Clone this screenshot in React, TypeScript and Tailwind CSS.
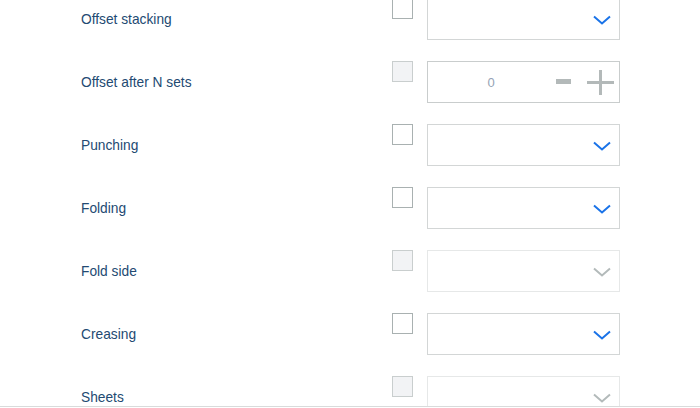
type Row = {
  label: string;
  kind: "select" | "number";
  disabled?: boolean;
};

const rows: Row[] = [
  { label: "Offset stacking", kind: "select" },
  { label: "Offset after N sets", kind: "number", disabled: true },
  { label: "Punching", kind: "select" },
  { label: "Folding", kind: "select" },
  { label: "Fold side", kind: "select", disabled: true },
  { label: "Creasing", kind: "select" },
  { label: "Sheets", kind: "select", disabled: true },
];

function Chevron({ disabled }: { disabled?: boolean }) {
  return (
    <svg width="18" height="10" viewBox="0 0 18 10" fill="none">
      <path
        d="M1 1.5 L9 8.5 L17 1.5"
        stroke={disabled ? "#b3baba" : "#1a73e8"}
        strokeWidth="2"
      />
    </svg>
  );
}

function Checkbox({ disabled }: { disabled?: boolean }) {
  return (
    <div
      className={
        disabled
          ? "w-[21px] h-[21px] shrink-0 border border-[#c9cece] bg-[#f2f3f5]"
          : "w-[21px] h-[21px] shrink-0 border border-[#a9b1b1] bg-white"
      }
    />
  );
}

function SelectBox({ disabled }: { disabled?: boolean }) {
  return (
    <div
      className={`w-[193px] h-[42px] shrink-0 flex items-center justify-end pr-[8px] pt-[2px] border ${
        disabled ? "border-[#e6e8e8]" : "border-[#d3d6d6]"
      }`}
    >
      <Chevron disabled={disabled} />
    </div>
  );
}

function NumberBox() {
  return (
    <div className="w-[193px] h-[42px] shrink-0 flex items-center border border-[#c9cdcd]">
      <span className="flex-1 pr-[2px] pt-[2px] text-center text-[13px] text-[#95a3b5]">0</span>
      <div className="flex items-center gap-[16px] pr-[5px]">
        <div className="w-[15px] h-[5px] bg-[#b3b9b9] -mt-[2px]" />
        <svg width="27" height="25" viewBox="0 0 27 25">
          <rect x="12" y="0" width="3" height="25" fill="#b3b9b9" />
          <rect x="0" y="11" width="27" height="3" fill="#b3b9b9" />
        </svg>
      </div>
    </div>
  );
}

export default function App() {
  return (
    <div
      className="w-[700px] h-[408px] flex flex-col bg-white"
      style={{ fontFamily: '"Liberation Sans", Arial, sans-serif' }}
    >
      <div className="flex-1 overflow-hidden">
        <div className="-mt-[2px] flex flex-col">
          {rows.map((row) => (
            <div key={row.label} className="h-[63px] flex items-start">
              <div className="w-[392px] h-[42px] pl-[81px] pt-[3px] flex items-center text-[13.75px] text-[#234a72]">
                {row.label}
              </div>
              <Checkbox disabled={row.disabled} />
              <div className="ml-[14px]">
                {row.kind === "number" ? (
                  <NumberBox />
                ) : (
                  <SelectBox disabled={row.disabled} />
                )}
              </div>
            </div>
          ))}
        </div>
      </div>
      <div className="h-[1px] bg-[#d9dbdb]" />
      <div className="h-[1px] bg-white" />
    </div>
  );
}
